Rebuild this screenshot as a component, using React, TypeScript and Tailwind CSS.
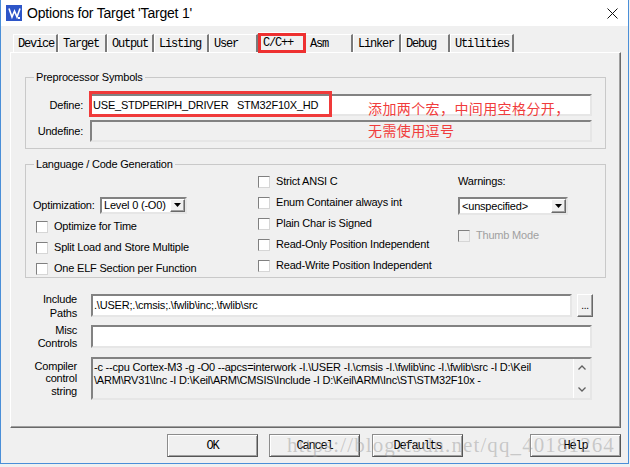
const sunken =
  "border-2 border-t-[#828282] border-l-[#828282] border-r-[#e6e6e6] border-b-[#e6e6e6]";
const raised =
  "border border-t-white border-l-white border-r-[#696969] border-b-[#696969] shadow-[inset_-1px_-1px_0_#a0a0a0]";
const mono = "font-['Liberation_Mono',monospace] text-[12px] tracking-[-1.2px]";

const tabs: [string, number][] = [
  ["Device", 45],
  ["Target", 49],
  ["Output", 47],
  ["Listing", 55],
  ["User", 49],
  ["C/C++", 47],
  ["Asm", 48],
  ["Linker", 48],
  ["Debug", 49],
  ["Utilities", 64],
];

function Check({ label, disabled }: { label: string; disabled?: boolean }) {
  return (
    <div className="flex h-[21px] items-center">
      <span
        className={`h-[12px] w-[12px] border border-t-[#808080] border-l-[#808080] border-r-[#d6d6d6] border-b-[#d6d6d6] ${
          disabled ? "bg-[#f0f0f0]" : "bg-white"
        }`}
      />
      <span className={`ml-[6px] whitespace-nowrap ${disabled ? "text-[#a0a0a0]" : ""}`}>{label}</span>
    </div>
  );
}

function Select({ value, className }: { value: string; className: string }) {
  return (
    <div className={`flex items-center bg-white ${sunken} ${className}`}>
      <span className="flex-1 whitespace-nowrap pl-[2px]">{value}</span>
      <span className={`flex h-full w-[15px] items-center justify-center bg-[#f0f0f0] ${raised}`}>
        <svg width="7" height="4" viewBox="0 0 7 4">
          <path d="M0 0h7L3.5 4z" fill="#000" />
        </svg>
      </span>
    </div>
  );
}

function Button({ label, className }: { label: string; className?: string }) {
  return (
    <div
      className={`flex h-[23px] w-[91px] items-center justify-center border border-[#8c8c8c] border-r-[#555] border-b-[#555] bg-[#f0f0f0] shadow-[inset_1px_1px_0_#fff,inset_-1px_-1px_0_#a0a0a0] ${mono} ${className ?? ""}`}
    >
      {label}
    </div>
  );
}

export default function App() {
  return (
    <div className="relative h-[467px] w-[630px] overflow-hidden bg-[#f0f0f0] font-['Liberation_Sans',Arial,sans-serif] text-[11px] tracking-[-0.2px] text-black">
      <div className="flex h-[464px] w-[629px] flex-col border-x border-b border-[#4a8fd8]">
        {/* title bar */}
        <div className="flex h-[26px] shrink-0 items-center bg-white">
          <svg className="ml-[5px]" width="16" height="16" viewBox="0 0 16 16">
            <rect width="16" height="16" fill="#2d55c8" />
            <path d="M3 3.5l3 8.5 2.5-6 2.5 6 3-8.5" stroke="#fff" strokeWidth="1.6" fill="none" />
            <rect x="12" y="12" width="2" height="2" fill="#fff" />
          </svg>
          <span className="ml-[5px] text-[14px] tracking-[-0.2px]">Options for Target 'Target 1'</span>
          <svg className="ml-auto mr-[10px]" width="11" height="11" viewBox="0 0 11 11">
            <path d="M0.5 0.5l10 10M10.5 0.5l-10 10" stroke="#111" strokeWidth="1" />
          </svg>
        </div>

        {/* tabs */}
        <div className={`ml-[12px] mt-[8px] flex h-[18px] items-end ${mono}`}>
          {tabs.map(([t, w]) =>
            t === "C/C++" ? (
              <div
                key={t}
                className="relative flex h-[20px] items-center border-l border-t border-white pl-[4px]"
                style={{ width: w }}
              >
                {t}
                <span className="absolute -left-[1px] top-0 h-[20px] w-[48px] border-[3px] border-[#ee3030]" />
              </div>
            ) : (
              <div
                key={t}
                className="flex h-[18px] items-center border-l border-t border-r-2 border-white border-r-[#7a7a7a] pl-[4px]"
                style={{ width: w }}
              >
                {t}
              </div>
            )
          )}
        </div>

        {/* panel */}
        <div className="ml-[9px] h-[376px] w-[611px] border border-t-white border-l-white border-r-[#696969] border-b-[#696969] shadow-[inset_-1px_-1px_0_#a0a0a0]">
          <fieldset className="ml-[14px] mt-[17px] h-[79px] w-[581px] border border-[#c9c9c9]">
            <legend className="ml-[8px] px-[2px] leading-[14px]">Preprocessor Symbols</legend>
            <div className="pt-[10px]">
              <div className="flex h-[22px] items-center">
                <span className="w-[57px] text-right">Define:</span>
                <div className={`relative ml-[7px] flex h-[22px] w-[502px] items-center bg-white ${sunken}`}>
                  <span className="whitespace-pre pl-[1px]">USE_STDPERIPH_DRIVER   STM32F10X_HD</span>
                  <span className="absolute -left-[3px] -top-[5px] h-[26px] w-[243px] border-[3px] border-[#f03a3a]" />
                  <div className="absolute left-[276px] top-[1px] z-10 font-['Noto_Sans_CJK_SC',sans-serif] text-[14px] leading-[22px] tracking-[0.4px] text-[#f03c3c]">
                    添加两个宏，中间用空格分开，
                    <br />
                    无需使用逗号
                  </div>
                </div>
              </div>
              <div className="mt-[4px] flex h-[22px] items-center">
                <span className="w-[57px] text-right">Undefine:</span>
                <div className={`ml-[7px] h-[22px] w-[502px] bg-[#f0f0f0] ${sunken}`} />
              </div>
            </div>
          </fieldset>

          <fieldset className="ml-[14px] mt-[8px] h-[121px] w-[581px] border border-[#c9c9c9]">
            <legend className="ml-[8px] px-[2px] leading-[14px]">Language / Code Generation</legend>
            <div className="flex">
              <div className="w-[232px] pl-[7px] pt-[26px]">
                <div className="flex h-[16px] items-center">
                  <span className="w-[67px]">Optimization:</span>
                  <Select value="Level 0 (-O0)" className="h-[17px] w-[87px]" />
                </div>
                <div className="mt-[3px] pl-[3px]">
                  <Check label="Optimize for Time" />
                  <Check label="Split Load and Store Multiple" />
                  <Check label="One ELF Section per Function" />
                </div>
              </div>
              <div className="w-[200px]">
                <Check label="Strict ANSI C" />
                <Check label="Enum Container always int" />
                <Check label="Plain Char is Signed" />
                <Check label="Read-Only Position Independent" />
                <Check label="Read-Write Position Independent" />
              </div>
              <div>
                <div className="flex h-[21px] items-center">Warnings:</div>
                <Select value="<unspecified>" className="mt-[5px] h-[18px] w-[110px]" />
                <div className="mt-[10px]">
                  <Check label="Thumb Mode" disabled />
                </div>
              </div>
            </div>
          </fieldset>

          <div className="ml-[14px] mt-[16px]">
            <div className="flex h-[23px] items-center">
              <div className="w-[52px] text-right leading-[14px]">
                Include
                <br />
                Paths
              </div>
              <div className={`ml-[14px] flex h-[23px] w-[481px] items-center bg-white ${sunken}`}>
                <span className="pl-[1px]">{".\\USER;.\\cmsis;.\\fwlib\\inc;.\\fwlib\\src"}</span>
              </div>
              <div className={`ml-[5px] flex h-[23px] w-[16px] items-end justify-center bg-[#f0f0f0] pb-[5px] text-[10px] leading-none ${raised} border-[#696969]`}>
                ...
              </div>
            </div>
            <div className="mt-[8px] flex h-[23px] items-center">
              <div className="w-[52px] text-right leading-[13px]">
                Misc
                <br />
                Controls
              </div>
              <div className={`ml-[14px] h-[23px] w-[501px] bg-white ${sunken}`} />
            </div>
            <div className="mt-[9px] flex h-[43px] items-center">
              <div className="w-[52px] text-right leading-[12.5px]">
                Compiler
                <br />
                control
                <br />
                string
              </div>
              <div className={`ml-[14px] flex h-[43px] w-[501px] bg-[#f0f0f0] ${sunken}`}>
                <div className="flex-1 pl-[1px] pt-[2px] leading-[13px] whitespace-nowrap">
                  {"-c --cpu Cortex-M3 -g -O0 --apcs=interwork -I.\\USER -I.\\cmsis -I.\\fwlib\\inc -I.\\fwlib\\src -I D:\\Keil"}
                  <br />
                  {"\\ARM\\RV31\\Inc -I D:\\Keil\\ARM\\CMSIS\\Include -I D:\\Keil\\ARM\\Inc\\ST\\STM32F10x -"}
                </div>
                <div className="flex w-[17px] flex-col items-center justify-between border-l border-white py-[6px]">
                  <svg width="8" height="5" viewBox="0 0 8 5">
                    <path d="M0.5 4.5L4 1l3.5 3.5" stroke="#606060" strokeWidth="1.3" fill="none" />
                  </svg>
                  <svg width="8" height="5" viewBox="0 0 8 5">
                    <path d="M0.5 0.5L4 4l3.5-3.5" stroke="#606060" strokeWidth="1.3" fill="none" />
                  </svg>
                </div>
              </div>
            </div>
          </div>
        </div>

        {/* buttons */}
        <div className="ml-[166px] mt-[6px] flex">
          <Button label="OK" />
          <Button label="Cancel" className="ml-[11px]" />
          <Button label="Defaults" className="ml-[12px] w-[90px]" />
          <Button label="Help" className="ml-[67px]" />
        </div>
      </div>

      <div className="absolute left-[287px] top-[433px] font-['Liberation_Serif',serif] text-[21px] leading-[24px] tracking-[1.1px] text-[rgba(150,150,150,0.45)]">
        https://blog.csdn.net/qq_40181264
      </div>
    </div>
  );
}
